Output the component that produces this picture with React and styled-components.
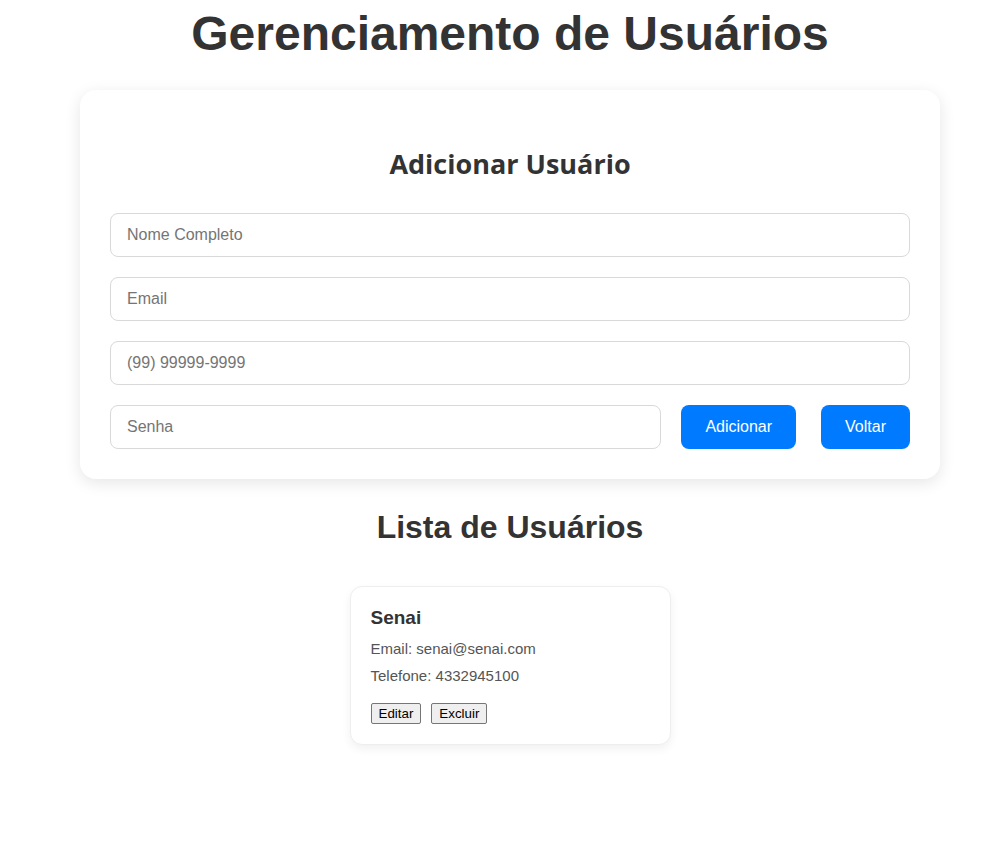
import React from "react";
import styled, { createGlobalStyle } from "styled-components";

const GlobalStyle = createGlobalStyle`
  body {
    margin: 0;
    background: #ffffff;
    font-family: "Liberation Sans", Arial, sans-serif;
  }
`;

const Page = styled.div`
  display: flex;
  flex-direction: column;
  align-items: center;
  padding: 0 0 40px 27px;
`;

const Title = styled.h1`
  font-size: 48px;
  font-weight: bold;
  color: #333;
  margin: 6px 0 29px;
  line-height: 55px;
`;

const FormCard = styled.div`
  width: 860px;
  box-sizing: border-box;
  background: #fff;
  border-radius: 16px;
  padding: 30px;
  box-shadow: 0 4px 16px rgba(0, 0, 0, 0.1);
  display: flex;
  flex-direction: column;
  gap: 20px;
`;

const FormTitle = styled.h2`
  font-family: "Open Sans", "Noto Sans", sans-serif;
  font-size: 27px;
  font-weight: 700;
  color: #333;
  text-align: center;
  margin: 25px 0 10px;
  line-height: 38px;
`;

const Input = styled.input`
  height: 44px;
  box-sizing: border-box;
  padding: 0 16px;
  border: 1px solid #d9d9d9;
  border-radius: 8px;
  font-family: "Liberation Sans", Arial, sans-serif;
  font-size: 16px;
  color: #333;
  flex: ${({ $grow }) => ($grow ? "1 1 auto" : "0 0 auto")};
  min-width: 0;
  &::placeholder {
    color: #757575;
  }
`;

const Row = styled.div`
  display: flex;
  align-items: center;
`;

const PrimaryButton = styled.button`
  height: 44px;
  padding: 0 24px;
  margin-left: ${({ $gap }) => $gap}px;
  border: none;
  border-radius: 8px;
  background: #007bff;
  color: #fff;
  font-family: "Liberation Sans", Arial, sans-serif;
  font-size: 16px;
  cursor: pointer;
  flex: 0 0 auto;
`;

const ListTitle = styled.h2`
  font-size: 32px;
  font-weight: bold;
  color: #333;
  margin: 30px 0 40px;
  line-height: 37px;
`;

const UserCard = styled.div`
  width: 321px;
  box-sizing: border-box;
  padding: 20px;
  border: 1px solid #eee;
  border-radius: 12px;
  background: #fff;
  box-shadow: 0 4px 10px rgba(0, 0, 0, 0.06);
`;

const UserName = styled.h3`
  font-size: 19px;
  font-weight: bold;
  color: #333;
  margin: 0 0 11px;
  line-height: 22px;
`;

const UserInfo = styled.p`
  font-size: 15px;
  color: #555;
  margin: 0 0 10px;
  line-height: 17px;
`;

const Actions = styled.div`
  display: flex;
  gap: 10px;
  margin-top: 19px;
`;

const SmallButton = styled.button`
  font-family: "Liberation Sans", Arial, sans-serif;
  font-size: 13.33px;
  padding: 1px 7px;
  height: 21px;
  background: #efefef;
  border: 1px solid #767676;
  border-radius: 2px;
  color: #000;
`;

export default function App() {
  return (
    <>
      <GlobalStyle />
      <Page>
        <Title>Gerenciamento de Usuários</Title>
        <FormCard>
          <FormTitle>Adicionar Usuário</FormTitle>
          <Input placeholder="Nome Completo" />
          <Input placeholder="Email" />
          <Input placeholder="(99) 99999-9999" />
          <Row>
            <Input $grow placeholder="Senha" type="password" />
            <PrimaryButton $gap={20}>Adicionar</PrimaryButton>
            <PrimaryButton $gap={25}>Voltar</PrimaryButton>
          </Row>
        </FormCard>
        <ListTitle>Lista de Usuários</ListTitle>
        <UserCard>
          <UserName>Senai</UserName>
          <UserInfo>Email: senai@senai.com</UserInfo>
          <UserInfo>Telefone: 4332945100</UserInfo>
          <Actions>
            <SmallButton>Editar</SmallButton>
            <SmallButton>Excluir</SmallButton>
          </Actions>
        </UserCard>
      </Page>
    </>
  );
}
